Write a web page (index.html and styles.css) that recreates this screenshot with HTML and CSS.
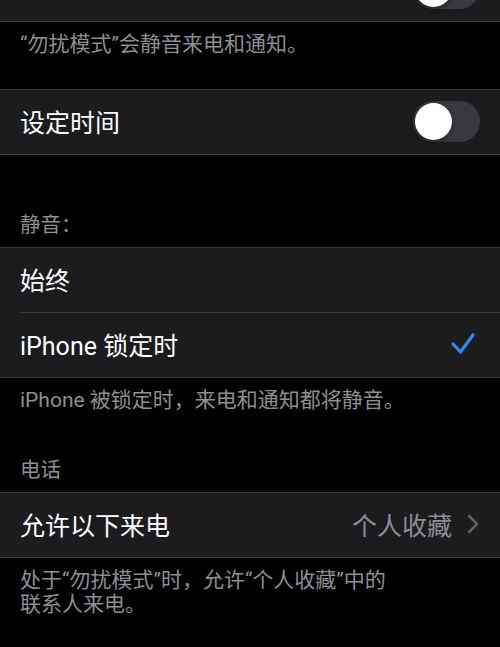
FILE: index.html
```html
<!DOCTYPE html>
<html lang="zh-CN">
<head>
    <meta charset="UTF-8">
    <meta name="viewport" content="width=device-width, initial-scale=1.0">
    <title>勿扰模式</title>
    <link rel="stylesheet" href="styles.css">
</head>
<body>
    <div class="screen">
        <!-- верхняя группа уже прокручена за край экрана, видна только нижняя кромка -->
        <div class="group group-scrolled">
            <div class="row">
                <span class="label"></span>
                <div class="switch"><div class="knob"></div></div>
            </div>
        </div>
        <div class="footer">“勿扰模式”会静音来电和通知。</div>

        <div class="group spaced">
            <div class="row">
                <span class="label">设定时间</span>
                <div class="switch"><div class="knob"></div></div>
            </div>
        </div>

        <div class="header">静音：</div>
        <div class="group">
            <div class="row">
                <span class="label">始终</span>
            </div>
            <div class="row">
                <span class="label">iPhone 锁定时</span>
                <svg class="check" width="26" height="24" viewBox="0 0 26 24">
                    <path d="M3 12 L10.5 20 L23 3" fill="none" stroke="#2f88f5" stroke-width="3.2" stroke-linecap="round" stroke-linejoin="round"/>
                </svg>
            </div>
        </div>
        <div class="footer">iPhone 被锁定时，来电和通知都将静音。</div>

        <div class="header">电话</div>
        <div class="group">
            <div class="row">
                <span class="label">允许以下来电</span>
                <span class="value">个人收藏</span>
                <svg class="chevron" width="12" height="20" viewBox="0 0 12 20">
                    <path d="M2 2 L10 10 L2 18" fill="none" stroke="#5c5c61" stroke-width="2.6" stroke-linecap="round" stroke-linejoin="round"/>
                </svg>
            </div>
        </div>
        <div class="footer">处于“勿扰模式”时，允许“个人收藏”中的<br>联系人来电。</div>
    </div>
</body>
</html>
```

FILE: styles.css
```css
* {
    margin: 0;
    padding: 0;
    box-sizing: border-box;
}

body {
    background: #000;
    color: #fff;
    font-family: Roboto, "Noto Sans CJK SC", sans-serif;
    overflow: hidden;
}

.screen {
    width: 500px;
    height: 647px;
    overflow: hidden;
}

.group {
    background: #1c1c1e;
    border-top: 1px solid #38383a;
    border-bottom: 1px solid #38383a;
    padding-left: 20px;
}

.group-scrolled {
    margin-top: -44px;
}

.group.spaced {
    margin-bottom: 45px;
}

.row {
    height: 64px;
    display: flex;
    align-items: center;
    padding-right: 20px;
    padding-bottom: 2px;
    font-size: 25px;
}

.row + .row {
    height: 65px;
    border-top: 1px solid #38383a;
}

.label {
    flex: 1;
    white-space: nowrap;
}

.value {
    color: #8e8e93;
    margin-right: 15px;
}

.check {
    margin-right: 4px;
}

.chevron {
    margin-right: 1px;
}

.switch {
    width: 67px;
    height: 41px;
    border-radius: 21px;
    background: #39393d;
    padding: 2px;
    display: flex;
}

.knob {
    width: 37px;
    height: 37px;
    border-radius: 50%;
    background: #fff;
    box-shadow: 0 2px 5px rgba(0, 0, 0, 0.35);
}

.footer {
    color: #8e8e93;
    font-size: 21px;
    line-height: 24px;
    padding: 10px 20px 33px;
}

.header {
    color: #8e8e93;
    font-size: 20.5px;
    line-height: 24px;
    padding: 13px 20px 10px;
}
```
